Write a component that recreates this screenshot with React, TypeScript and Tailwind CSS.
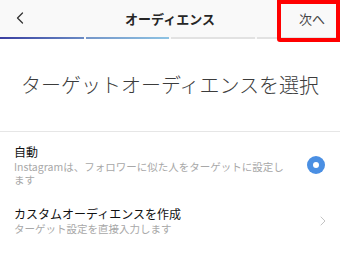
import { ChevronLeft, ChevronRight } from "lucide-react";

const font = { fontFamily: '"Noto Sans CJK JP", "Noto Sans", sans-serif' };

const Option = ({ title, sub, right }: { title: string; sub: string; right: React.ReactNode }) => (
  <div className="flex items-center pl-[14px] pr-[13px]">
    <div className="flex-1 pr-[18px]">
      <div className="text-[12px] font-normal leading-[15px] text-[#111]">{title}</div>
      <div className="mt-[1px] text-[10.5px] leading-[13px] text-[#a8a8a8]">{sub}</div>
    </div>
    {right}
  </div>
);

export default function App() {
  return (
    <div className="relative h-[280px] w-[340px] overflow-hidden bg-white" style={font}>
      {/* header */}
      <div className="relative flex h-[37px] items-center justify-center bg-[#f9f9f9]">
        <ChevronLeft className="absolute left-[10px] top-[8px] h-[20px] w-[20px] text-[#333]" strokeWidth={1.5} />
        <div className="text-[13px] font-bold text-[#262626]">オーディエンス</div>
        <div className="absolute right-[15px] top-[9px] text-[13px] text-[#444]">次へ</div>
      </div>
      {/* step progress */}
      <div className="flex h-[2px] gap-[2px] bg-[#f9f9f9]">
        <div className="flex-1 bg-gradient-to-r from-[#3a3da0] to-[#6a8ac4]" />
        <div className="flex-1 bg-gradient-to-r from-[#7596c9] to-[#8ec3e3]" />
        <div className="flex-1 bg-[#e2e2e2]" />
        <div className="flex-1 bg-[#e2e2e2]" />
      </div>

      <div className="flex h-[93px] items-center justify-center border-b border-[#e6e6e6]">
        <div className="text-[20px] font-light text-[#3c3c3c]">ターゲットオーディエンスを選択</div>
      </div>

      <div className="pt-[12px]">
        <Option
          title="自動"
          sub="Instagramは、フォロワーに似た人をターゲットに設定します"
          right={
            <div className="mr-[2px] flex h-[18px] w-[18px] items-center justify-center rounded-full bg-[#4a8fe3]">
              <div className="h-[6px] w-[6px] rounded-full bg-white" />
            </div>
          }
        />
        <div className="h-[20px]" />
        <Option
          title="カスタムオーディエンスを作成"
          sub="ターゲット設定を直接入力します"
          right={<ChevronRight className="-mr-[4px] h-[16px] w-[16px] text-[#c4c4c4]" strokeWidth={1.5} />}
        />
      </div>

      {/* annotation box */}
      <div className="absolute left-[277px] top-0 h-[42px] w-[63px] rounded-bl-[3px] border-4 border-[#ff0000]" />
    </div>
  );
}
